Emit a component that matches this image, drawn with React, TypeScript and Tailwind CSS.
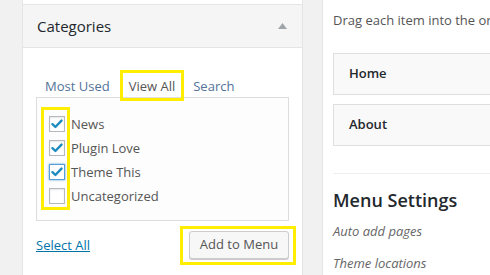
import React from "react";

const font = { fontFamily: '"Open Sans", "Noto Sans", sans-serif' };

function Check({ checked, focus }: { checked?: boolean; focus?: boolean }) {
  return (
    <div
      className={
        "w-[16px] h-[16px] bg-white border flex items-center justify-center " +
        (focus
          ? "border-[#5b9dd9] shadow-[0_0_2px_rgba(30,140,190,0.8)]"
          : "border-[#b4b9be] shadow-[inset_0_1px_2px_rgba(0,0,0,0.1)]")
      }
    >
      {checked && (
        <svg width="12" height="10" viewBox="0 0 12 10">
          <path d="M1.5 5.2 L4.4 8 L10.5 1.6" fill="none" stroke="#1e8cbe" strokeWidth="2.4" strokeLinecap="round" strokeLinejoin="round" />
        </svg>
      )}
    </div>
  );
}

export default function App() {
  return (
    <div className="w-[490px] h-[275px] bg-[#f1f1f1] flex overflow-hidden" style={font}>
      {/* left column */}
      <div className="ml-[22px] w-[281px] shrink-0 flex flex-col">
        <div className="h-[5px] bg-white border-x border-b border-[#e5e5e5]" />
        <div className="flex-1 border-x border-[#e5e5e5] bg-white flex flex-col">
          <div className="h-[43px] bg-[#f5f5f5] border-b border-[#e5e5e5] flex items-center justify-between pl-[14px] pr-[15px]">
            <span className="text-[15px] text-[#23282d] leading-none">Categories</span>
            <svg width="9" height="6" viewBox="0 0 9 6">
              <path d="M4.5 0 L9 6 L0 6 Z" fill="#a0a5aa" />
            </svg>
          </div>
          <div className="px-[13px] pt-[22px]">
            <div className="flex items-center pl-[9px] text-[13px] leading-[18px]">
              <span className="text-[#52739a]">Most Used</span>
              <div className="relative z-10 ml-[10px] border-[3px] border-[#ffee00] h-[31px] px-[6px] flex items-center text-[#555]">
                View All
              </div>
              <span className="ml-[9px] text-[#52739a]">Search</span>
            </div>
            <div className="-mt-[4px] border border-[#dddddd] bg-[#fdfdfd] pl-[4px] pt-[9px] pb-[10px] flex items-start">
              <div className="border-[3px] border-[#ffee00] pl-[5px] pr-[2px] pt-[6px] pb-[3px] flex flex-col gap-[8px]">
                <Check checked />
                <Check checked />
                <Check checked focus />
                <Check />
              </div>
              <div className="ml-[1px] pt-[9px] flex flex-col gap-[8px] text-[13px] text-[#555]">
                <div className="h-[16px] leading-[16px]">News</div>
                <div className="h-[16px] leading-[16px]">Plugin Love</div>
                <div className="h-[16px] leading-[16px]">Theme This</div>
                <div className="h-[16px] leading-[16px]">Uncategorized</div>
              </div>
            </div>
            <div className="mt-[5px] -mr-[7px] flex items-center justify-between">
              <span className="text-[13px] text-[#0073aa] underline">Select All</span>
              <div className="border-[3px] border-[#ffee00] pt-[2px] pb-[3px] pl-[6px] pr-[4px]">
                <div className="w-[100px] h-[28px] rounded-[3px] border border-[#cccccc] bg-[#f7f7f7] shadow-[0_1px_0_#cccccc] flex items-center justify-center text-[13px] text-[#555]">
                  Add to Menu
                </div>
              </div>
            </div>
          </div>
        </div>
      </div>
      {/* right panel */}
      <div className="ml-[19px] w-[300px] shrink-0 bg-white border-l border-[#e5e5e5] pl-[10px] pt-[10px] flex flex-col">
        <div className="h-[20px] leading-[20px] text-[13px] text-[#555] whitespace-nowrap">
          Drag each item into the order you prefer.
        </div>
        <div className="mt-[23px] h-[42px] border border-[#dfdfdf] bg-[#f9f9f9] pl-[15px] flex items-center text-[13px] font-semibold text-[#23282d]">
          Home
        </div>
        <div className="mt-[9px] h-[42px] border border-[#dfdfdf] bg-[#f9f9f9] pl-[15px] flex items-center text-[13px] font-semibold text-[#23282d]">
          About
        </div>
        <div className="mt-[27px] border-t border-[#eeeeee]" />
        <div className="mt-[14px] h-[24px] leading-[24px] text-[18px] font-semibold text-[#23282d]">
          Menu Settings
        </div>
        <div className="mt-[9px] h-[20px] leading-[20px] text-[13px] italic text-[#666]">Auto add pages</div>
        <div className="mt-[12px] h-[20px] leading-[20px] text-[13px] italic text-[#666]">Theme locations</div>
      </div>
    </div>
  );
}
